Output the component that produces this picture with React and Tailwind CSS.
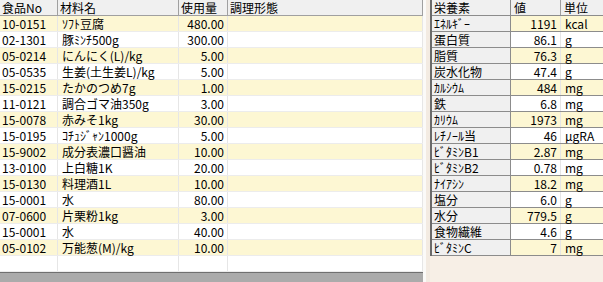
import React from "react";

const FONT = { fontFamily: "'Noto Sans CJK JP', 'Liberation Sans', sans-serif" };

const ITEMS = [
  ["10-0151", "ｿﾌﾄ豆腐", "480.00"],
  ["02-1301", "豚ﾐﾝﾁ500g", "300.00"],
  ["05-0214", "にんにく(L)/kg", "5.00"],
  ["05-0535", "生姜(土生姜L)/kg", "5.00"],
  ["15-0215", "たかのつめ7g", "1.00"],
  ["11-0121", "調合ゴマ油350g", "3.00"],
  ["15-0078", "赤みそ1kg", "30.00"],
  ["15-0195", "ｺﾁｭｼﾞｬﾝ1000g", "5.00"],
  ["15-9002", "成分表濃口醤油", "10.00"],
  ["13-0100", "上白糖1K", "20.00"],
  ["15-0130", "料理酒1L", "10.00"],
  ["15-0001", "水", "80.00"],
  ["07-0600", "片栗粉1kg", "3.00"],
  ["15-0001", "水", "40.00"],
  ["05-0102", "万能葱(M)/kg", "10.00"],
  ["", "", ""],
];

const NUTRIENTS = [
  ["ｴﾈﾙｷﾞｰ", "1191", "kcal"],
  ["蛋白質", "86.1", "g"],
  ["脂質", "76.3", "g"],
  ["炭水化物", "47.4", "g"],
  ["ｶﾙｼｳﾑ", "484", "mg"],
  ["鉄", "6.8", "mg"],
  ["ｶﾘｳﾑ", "1973", "mg"],
  ["ﾚﾁﾉｰﾙ当", "46", "μgRA"],
  ["ﾋﾞﾀﾐﾝB1", "2.87", "mg"],
  ["ﾋﾞﾀﾐﾝB2", "0.78", "mg"],
  ["ﾅｲｱｼﾝ", "18.2", "mg"],
  ["塩分", "6.0", "g"],
  ["水分", "779.5", "g"],
  ["食物繊維", "4.6", "g"],
  ["ﾋﾞﾀﾐﾝC", "7", "mg"],
];

function FoodTable() {
  return (
    <div className="flex w-[423px] flex-col bg-white">
      <div className="grid h-4 grid-cols-[58px_121px_49px_195px] border-b border-[#a0a0a0] bg-[#f0f0f0]">
        <div className="border-r border-[#a0a0a0] pl-[2px]">食品No</div>
        <div className="border-r border-[#a0a0a0] pl-[2px]">材料名</div>
        <div className="border-r border-[#a0a0a0] pl-[2px]">使用量</div>
        <div className="border-r border-[#a0a0a0] pl-[2px]">調理形態</div>
      </div>
      {ITEMS.map((r, i) => (
        <div
          key={i}
          className={`grid h-4 grid-cols-[58px_121px_49px_195px] border-b border-[#ececec] ${
            i % 2 === 0 && r[0] ? "bg-[#fdf7d3]" : "bg-white"
          }`}
        >
          <div className="border-r border-[#e6e6e6] pl-[2px]">{r[0]}</div>
          <div className="border-r border-[#e6e6e6] pl-[4px]">{r[1]}</div>
          <div className="border-r border-[#e6e6e6] pr-[3px] text-right">{r[2]}</div>
          <div className="border-r border-[#e6e6e6]"></div>
        </div>
      ))}
      <div className="flex-1 border-t border-[#707070] bg-[#ababab]" />
    </div>
  );
}

function NutrientTable() {
  return (
    <div className="flex flex-col border-l-2 border-[#6a6a6a]">
      <div className="grid h-4 grid-cols-[79px_50px_42px] border-b border-[#8c8c8c] bg-[#f0f0f0]">
        <div className="border-r border-[#8c8c8c] pl-[2px]">栄養素</div>
        <div className="border-r border-[#a0a0a0] pl-[3px]">値</div>
        <div className="pl-[3px]">単位</div>
      </div>
      {NUTRIENTS.map((r, i) => {
        const bg = i % 2 === 0 ? "bg-[#fdf7d3]" : "bg-white";
        return (
          <div key={i} className="grid h-4 grid-cols-[79px_50px_42px] border-b border-[#8c8c8c]">
            <div className="border-r border-[#8c8c8c] bg-[#f0f0f0] pl-[2px]">{r[0]}</div>
            <div className={`border-r border-[#e6e6e6] pr-[3px] text-right ${bg}`}>{r[1]}</div>
            <div className={`pl-[4px] ${bg}`}>{r[2]}</div>
          </div>
        );
      })}
    </div>
  );
}

export default function App() {
  return (
    <div
      className="flex h-[282px] w-[603px] overflow-hidden bg-[#f7efe6] text-[12px] leading-[15px] text-black"
      style={FONT}
    >
      <FoodTable />
      <div className="w-[3px] bg-[#fbfaf8]" />
      <div className="w-[4px] bg-[#f3ebe2]" />
      <div className="flex-1">
        <NutrientTable />
      </div>
    </div>
  );
}
